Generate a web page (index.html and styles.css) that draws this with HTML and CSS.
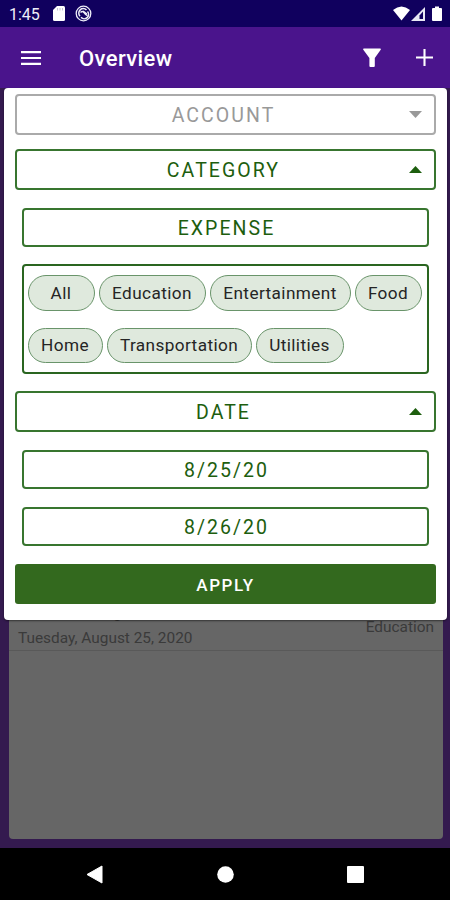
FILE: index.html
```html
<!DOCTYPE html>
<html lang="en">
<head>
<meta charset="utf-8">
<title>Overview</title>
<link rel="stylesheet" href="styles.css">
</head>
<body>
<div class="phone">
  <header class="status">
    <span class="clock">1:45</span>
    <svg class="sd" width="12" height="15" viewBox="0 0 12 15"><path d="M4 0h6.500Q12 0 12 1.500v12Q12 15 10.500 15h-9Q0 15 0 13.500V4z" fill="#fff"/><path d="M4.500 2v2.500M7 2v2.500M9.500 2v2.500" stroke="#b5b2cc" stroke-width=".8"/></svg>
    <svg class="sync" width="17" height="17" viewBox="0 0 17 17" fill="none" stroke="#eeeef8"><circle cx="8.500" cy="8.500" r="7.300" stroke-width="1.300"/><path d="M5 11.200A4.300 4.300 0 0 1 11.500 5M12.500 6.500A4.300 4.300 0 0 1 6 12.300M5.500 7.500q2-2 3.500 0t3.500 3M8 6l4 3" stroke-width="1.500"/></svg>
    <svg class="signals" width="50" height="16" viewBox="0 0 50 16"><path d="M0 4Q8.500-3.200 17 4L8.500 14.500z" fill="#fff"/><path d="M18 15L32 1v14z" fill="#e8e8f4"/><path d="M26.500 13V9.500L30 5.500V13z" fill="#10005e"/><path d="M40 2h2V.5h4V2h2q1 0 1 1v11q0 1-1 1h-8q-1 0-1-1V3q0-1 1-1z" fill="#fff"/></svg>
  </header>
  <nav class="appbar">
    <svg class="menu" width="20" height="14" viewBox="0 0 20 14"><path d="M0 1.100h20M0 7h20M0 12.900h20" stroke="#fff" stroke-width="2.100"/></svg>
    <h1>Overview</h1>
    <svg class="funnel" width="18" height="20" viewBox="0 0 18 20"><path d="M.8 0.500h16.400q1 .4.500 1.300L11.800 10v8q0 1-1 1H7.400q-1 0-1-1v-8L.3 1.800Q-.2.9.8.5z" fill="#fff"/></svg>
    <svg width="17" height="17" viewBox="0 0 17 17"><path d="M8.500 0v17M0 8.500h17" stroke="#fff" stroke-width="2.100"/></svg>
  </nav>
  <main class="content">
    <section class="records">
      <div class="record">
        <div><div class="name">Cash - Checking</div><div class="day">Tuesday, August 25, 2020</div></div>
        <div class="kind">Education</div>
      </div>
    </section>
    <form class="dialog">
      <div class="box off"><span>ACCOUNT</span><svg class="arrow" width="13" height="7" viewBox="0 0 13 7"><path d="M0 0h13L6.500 7z" fill="#999"/></svg></div>
      <div class="box category"><span>CATEGORY</span><svg class="arrow" width="13" height="7" viewBox="0 0 13 7"><path d="M0 7h13L6.500 0z" fill="#1d5e0e"/></svg></div>
      <div class="box inner expense"><span>EXPENSE</span></div>
      <div class="chips">
        <div class="row"><span class="chip all">All</span><span class="chip education">Education</span><span class="chip entertainment">Entertainment</span><span class="chip food">Food</span></div>
        <div class="row"><span class="chip home">Home</span><span class="chip transportation">Transportation</span><span class="chip utilities">Utilities</span></div>
      </div>
      <div class="box date"><span>DATE</span><svg class="arrow" width="13" height="7" viewBox="0 0 13 7"><path d="M0 7h13L6.500 0z" fill="#1d5e0e"/></svg></div>
      <div class="box inner from"><span>8/25/20</span></div>
      <div class="box inner to"><span>8/26/20</span></div>
      <div class="apply">APPLY</div>
    </form>
  </main>
  <footer class="nav">
    <svg width="17" height="19" viewBox="0 0 17 19"><path d="M16 1v17L1 9.500z" fill="#fff" stroke="#fff" stroke-linejoin="round"/></svg>
    <svg width="17" height="17" viewBox="0 0 17 17"><circle cx="8.500" cy="8.500" r="8.300" fill="#fff"/></svg>
    <svg width="17" height="17" viewBox="0 0 17 17"><rect width="17" height="17" rx="1" fill="#fff"/></svg>
  </footer>
</div>
</body>
</html>
```
FILE: styles.css
```css
* { box-sizing: border-box; }
body { margin: 0; font-family: Roboto, sans-serif; }
.phone { width: 450px; height: 900px; display: flex; flex-direction: column; overflow: hidden; background: #341a4f; }
.status { height: 27px; flex: none; background: #10005e; color: #eeeef8; display: flex; align-items: center; padding: 0 7px 0 9px; }
.clock { font-size: 16px; width: 44px; padding-top: 1px; }
.sync { margin-left: 10px; }
.signals { margin-left: auto; }
.appbar { height: 61px; flex: none; background: #4a148c; color: #fff; display: flex; align-items: center; padding: 0 17px 0 21px; }
h1 { margin: 2px auto 0 38px; font-size: 22px; line-height: 26px; font-weight: 500; letter-spacing: .4px; }
.funnel { margin-right: 35px; }
.content { flex: 1; position: relative; padding: 0 7px 9px 9px; display: flex; }
.records { flex: 1; background: #666; border-radius: 4px; padding-top: 516px; }
.record { height: 47px; border-bottom: 1px solid #595959; padding: 0 9px; display: flex; justify-content: space-between; color: #3a3a3a; font-size: 15.400px; line-height: 20px; }
.name { height: 24px; font-size: 14.500px; }
.kind { padding-top: 13px; }
.dialog { position: absolute; left: 4px; top: 0; width: 443px; height: 532px; padding: 6px 11px; background: #fff; border-radius: 4px; box-shadow: 0 1px 2px rgba(0,0,0,.5); }
.box { height: 41px; border: 2px solid #38752f; border-radius: 4px; color: #1d5e0e; display: flex; align-items: center; justify-content: center; position: relative; font-size: 19.500px; letter-spacing: 2.050px; padding: 1px 4px 0 0; }
.off { color: #999; border-color: #aaa; }
.arrow { position: absolute; right: 12px; top: 15px; }
.category { margin-top: 14px; }
.inner { height: 39px; margin: 18px 7px 0; padding: 1px 0 0 2px; }
.chips { height: 110px; margin: 17px 7px 0; border: 2px solid #2a6520; border-radius: 4px; padding: 9px 0 0 4px; display: flex; flex-direction: column; gap: 17px; }
.row { display: flex; gap: 4px; }
.chip { height: 35.500px; border: 1px solid #69946a; border-radius: 18px; background: #dfe9dd; color: #252525; display: flex; align-items: center; justify-content: center; font-size: 17.200px; letter-spacing: .4px; padding-right: 1px; }
.all { width: 67px; }
.education { width: 107px; }
.entertainment { width: 141px; }
.food { width: 67px; }
.home { width: 75px; }
.transportation { width: 145px; }
.utilities { width: 88px; }
.date { margin-top: 17px; }
.to { margin-top: 18px; }
.apply { height: 40px; margin-top: 18px; padding-top: 2px; border-radius: 3px; background: #33691e; color: #fff; font-size: 17px; font-weight: 500; letter-spacing: 1.600px; display: flex; align-items: center; justify-content: center; }
.nav { height: 52px; flex: none; background: #000; display: flex; justify-content: space-between; align-items: center; padding: 0 86px; }
```
